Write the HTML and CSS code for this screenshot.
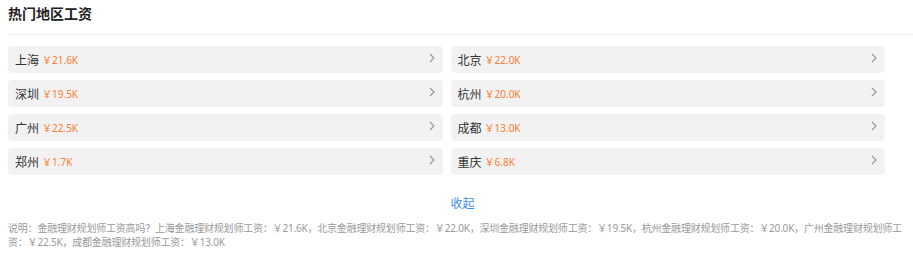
FILE: index.html
```html
<!DOCTYPE html>
<html lang="zh-CN">
  <head>
    <meta charset="UTF-8" />
    <meta name="viewport" content="width=device-width, initial-scale=1.0" />
    <link rel="stylesheet" href="styles.css">
    <title>热门地区工资</title>
  </head>
  <body>
    <div class="section">
      <div class="section-head">
        <h3 class="section-title">热门地区工资</h3>
      </div>
      <div class="city-list">
        <a class="city-item" href="#"><span class="city-name">上海</span><span class="city-salary">￥21.6K</span><svg class="arrow" viewBox="0 0 6 10"><path d="M1 1l4 4-4 4" /></svg></a>
        <a class="city-item" href="#"><span class="city-name">北京</span><span class="city-salary">￥22.0K</span><svg class="arrow" viewBox="0 0 6 10"><path d="M1 1l4 4-4 4" /></svg></a>
        <a class="city-item" href="#"><span class="city-name">深圳</span><span class="city-salary">￥19.5K</span><svg class="arrow" viewBox="0 0 6 10"><path d="M1 1l4 4-4 4" /></svg></a>
        <a class="city-item" href="#"><span class="city-name">杭州</span><span class="city-salary">￥20.0K</span><svg class="arrow" viewBox="0 0 6 10"><path d="M1 1l4 4-4 4" /></svg></a>
        <a class="city-item" href="#"><span class="city-name">广州</span><span class="city-salary">￥22.5K</span><svg class="arrow" viewBox="0 0 6 10"><path d="M1 1l4 4-4 4" /></svg></a>
        <a class="city-item" href="#"><span class="city-name">成都</span><span class="city-salary">￥13.0K</span><svg class="arrow" viewBox="0 0 6 10"><path d="M1 1l4 4-4 4" /></svg></a>
        <a class="city-item" href="#"><span class="city-name">郑州</span><span class="city-salary">￥1.7K</span><svg class="arrow" viewBox="0 0 6 10"><path d="M1 1l4 4-4 4" /></svg></a>
        <a class="city-item" href="#"><span class="city-name">重庆</span><span class="city-salary">￥6.8K</span><svg class="arrow" viewBox="0 0 6 10"><path d="M1 1l4 4-4 4" /></svg></a>
      </div>
      <div class="toggle">
        <a class="toggle-link" href="#">收起</a>
      </div>
      <p class="note">说明：金融理财规划师工资高吗？上海金融理财规划师工资：￥21.6K，北京金融理财规划师工资：￥22.0K，深圳金融理财规划师工资：￥19.5K，杭州金融理财规划师工资：￥20.0K，广州金融理财规划师工资：￥22.5K，成都金融理财规划师工资：￥13.0K</p>
    </div>
  </body>
</html>
```

FILE: styles.css
```css
*,
*::after,
*::before {
  box-sizing: border-box;
}

body {
  margin: 0;
  font-family: "Noto Sans", "Noto Sans CJK SC", sans-serif;
  background: #fff;
}

.section {
  padding: 0 8px;
}

.section-head {
  height: 35px;
  border-bottom: 1px solid #f3f3f3;
  margin-right: -8px;
}

.section-title {
  margin: 0;
  font-size: 14px;
  line-height: 27px;
  font-weight: bold;
  color: #222;
}

.city-list {
  display: grid;
  grid-template-columns: 1fr 1fr;
  column-gap: 8px;
  row-gap: 7px;
  margin: 11px 20px 0 0;
}

.city-item {
  display: flex;
  align-items: center;
  height: 27px;
  padding: 0 8px 0 7px;
  background-color: #f2f2f2;
  border-radius: 4px;
  text-decoration: none;
}

.city-name {
  font-size: 12px;
  color: #333;
  margin-right: 3px;
}

.city-salary {
  font-size: 10px;
  color: #ff7b2e;
  flex: 1;
}

.arrow {
  width: 6px;
  height: 10px;
  margin-top: -3px;
  fill: none;
  stroke: #999;
  stroke-width: 1.2;
}

.toggle {
  text-align: center;
  padding: 19px 0 0 12px;
  line-height: 17px;
}

.toggle-link {
  font-size: 12px;
  color: #3c8ce8;
  text-decoration: none;
}

.note {
  margin: 9px 0 0;
  font-size: 10px;
  line-height: 14px;
  letter-spacing: -0.2px;
  color: #999;
}
```
